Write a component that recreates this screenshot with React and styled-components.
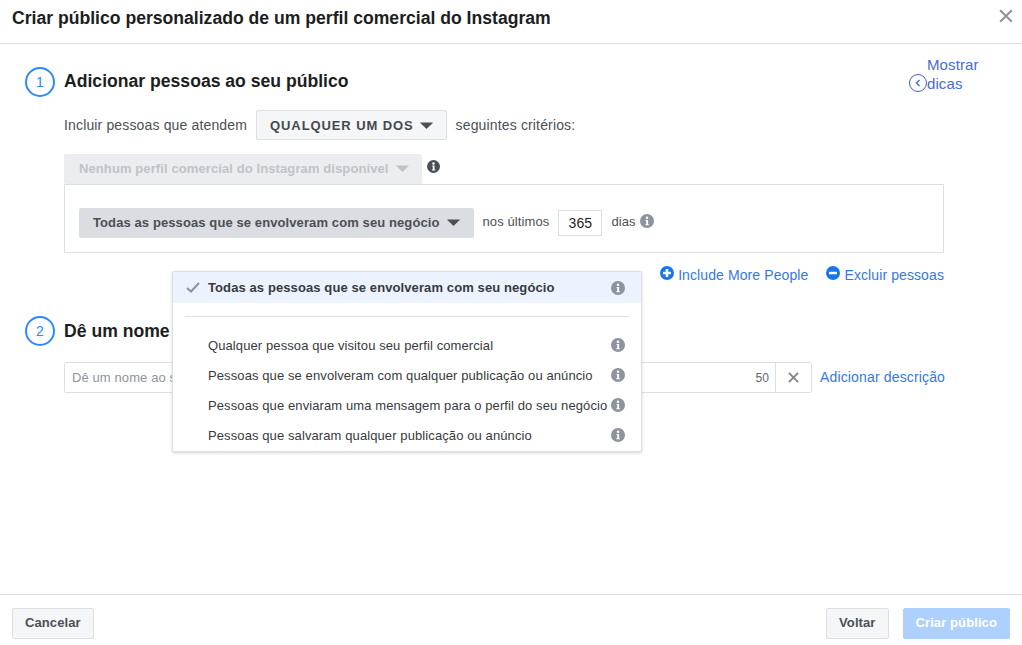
import React from "react";
import styled, { createGlobalStyle } from "styled-components";

const GlobalStyle = createGlobalStyle`
  html, body {
    margin: 0;
    background: #fff;
  }
  * {
    box-sizing: border-box;
  }
`;

const InfoIcon = ({ size = 14, color = "#8d949e" }) => (
  <svg width={size} height={size} viewBox="0 0 14 14" style={{ flex: "none", display: "block" }}>
    <circle cx="7" cy="7" r="7" fill={color} />
    <circle cx="7" cy="3.7" r="1.3" fill="#fff" />
    <path d="M5.6 6h2.5v4.2h.8v1.1H5.3v-1.1h.9V7.1h-.6z" fill="#fff" />
  </svg>
);

const Caret = ({ color = "#4b4f56" }) => (
  <svg width="13" height="7" viewBox="0 0 13 7" style={{ flex: "none" }}>
    <path d="M0.6 0.4h11.8c.4 0 .6.4.3.7L7 6.6a.7.7 0 0 1-1 0L.3 1.1C0 .8.2.4.6.4z" fill={color} />
  </svg>
);

const SignIcon = ({ minus }) => (
  <svg width="14" height="14" viewBox="0 0 14 14" style={{ flex: "none", display: "block", marginTop: "-1px" }}>
    <circle cx="7" cy="7" r="7" fill="#1877e8" />
    <rect x="3" y="5.7" width="8" height="2.6" rx="0.6" fill="#fff" />
    {!minus && <rect x="5.7" y="3" width="2.6" height="8" rx="0.6" fill="#fff" />}
  </svg>
);

const Cross = ({ size = 12, color = "#7f8389", weight = 2 }) => (
  <svg width={size} height={size} viewBox="0 0 12 12" style={{ display: "block" }}>
    <path d="M1 1l10 10M11 1L1 11" stroke={color} strokeWidth={weight} fill="none" />
  </svg>
);

const Page = styled.div`
  width: 1022px;
  height: 645px;
  display: flex;
  flex-direction: column;
  position: relative;
  overflow: hidden;
  font-family: "Liberation Sans", Arial, sans-serif;
  font-size: 13px;
  letter-spacing: 0.1px;
  color: #1c1e21;
`;

const Header = styled.header`
  height: 44px;
  flex: none;
  display: flex;
  justify-content: space-between;
  padding: 0 9px 0 12px;
  border-bottom: 1px solid #dddfe2;
`;

const Title = styled.h1`
  margin: 0;
  font-size: 17.6px;
  line-height: 36px;
  font-weight: 700;
  letter-spacing: 0;
`;

const CloseBtn = styled.span`
  margin-top: 9px;
`;

const Body = styled.main`
  flex: 1;
  padding: 12px 0 0 25px;
`;

const SectionHead = styled.div`
  display: flex;
  align-items: flex-start;
  gap: 9px;
  height: ${({ $tall }) => ($tall ? "54px" : "46px")};
`;

const Step = styled.div`
  width: 30px;
  height: 30px;
  flex: none;
  margin-top: ${({ $top }) => $top}px;
  border: 2px solid #2d88ff;
  border-radius: 50%;
  color: #2d88ff;
  font-size: 14px;
  line-height: 26px;
  text-align: center;
`;

const SectionTitle = styled.h2`
  margin: ${({ $top }) => $top}px 0 0;
  font-size: 17.6px;
  line-height: 30px;
  font-weight: 700;
  letter-spacing: 0;
`;

const Tips = styled.a`
  width: 76px;
  height: 38px;
  margin: -1px 37px 0 auto;
  padding-left: 18px;
  position: relative;
  font-size: 15px;
  line-height: 19px;
  color: #4a6bd6;
`;

const TipsIcon = styled.span`
  position: absolute;
  left: 0;
  top: 19px;
  width: 18px;
  height: 18px;
  border: 1px solid #3b66c4;
  border-radius: 50%;
  display: flex;
  align-items: center;
  justify-content: center;
`;

const Content = styled.div`
  margin-left: 39px;
  width: 880px;
`;

const CriteriaRow = styled.div`
  display: flex;
  align-items: center;
  gap: 9px;
  height: 30px;
  margin-bottom: 14px;
  font-size: 14px;
  letter-spacing: 0.15px;
  color: #4b4f56;
`;

const Select = styled.div`
  height: 30px;
  display: inline-flex;
  align-items: center;
  gap: 7px;
  flex: none;
  padding: 0 13px 2px;
  border: 1px solid ${({ $variant }) => ($variant === "outline" ? "#dddfe2" : "transparent")};
  border-radius: 2px;
  font-size: 13px;
  font-weight: 700;
  background: ${({ $variant }) =>
    $variant === "outline" ? "#f5f6f7" : $variant === "disabled" ? "#ebedf0" : "#dadde1"};
  color: ${({ $variant }) => ($variant === "disabled" ? "#bec3c9" : "#4b4f56")};
`;

const AnyOf = styled(Select)`
  padding-bottom: 0;
  gap: 6px;
  letter-spacing: 0.9px;
  color: #444950;
`;

const SourceSelect = styled(Select)`
  padding-left: 14px;
  padding-right: 12px;
`;

const SourceRow = styled.div`
  display: flex;
  align-items: flex-start;
  gap: 5px;
`;

const SourceInfo = styled.span`
  margin: 6px 0 0 0;
`;

const RuleBox = styled.div`
  height: 69px;
  border: 1px solid #dddfe2;
  padding: 23px 14px 0;
  display: flex;
  align-items: flex-start;
  font-size: 13px;
  color: #4b4f56;
`;

const RuleText = styled.span`
  margin: 6px 9px 0;
  line-height: 16px;
`;

const DaysInput = styled.div`
  width: 44px;
  height: 26px;
  margin-top: 2px;
  border: 1px solid #dddfe2;
  color: #1c1e21;
  font-size: 14px;
  line-height: 24px;
  text-align: center;
`;

const RuleInfo = styled.span`
  margin: 6px 0 0 -5px;
`;

const LinksRow = styled.div`
  display: flex;
  justify-content: flex-end;
  gap: 18px;
  margin-top: 14px;
  height: 49px;
`;

const ActionLink = styled.a`
  display: flex;
  align-items: flex-start;
  gap: 4px;
  font-size: 14px;
  line-height: 16px;
  letter-spacing: 0.1px;
  color: #3578e5;
`;

const NameRow = styled.div`
  display: flex;
  align-items: center;
  height: 31px;
`;

const NameField = styled.div`
  width: 748px;
  height: 31px;
  flex: none;
  display: flex;
  align-items: center;
  justify-content: space-between;
  border: 1px solid #dddfe2;
  border-radius: 2px;
  font-size: 13px;
`;

const Placeholder = styled.span`
  padding-left: 7px;
  color: #90949c;
`;

const Counter = styled.div`
  display: flex;
  align-items: center;
  height: 100%;
  color: #606770;
  font-size: 12px;
`;

const Count = styled.span`
  padding-right: 6px;
`;

const ClearBox = styled.span`
  width: 36px;
  height: 100%;
  display: flex;
  align-items: center;
  justify-content: center;
  border-left: 1px solid #dddfe2;
`;

const DescLink = styled.a`
  margin: -1px 0 0 8px;
  font-size: 14px;
  letter-spacing: 0.15px;
  color: #3578e5;
  white-space: nowrap;
`;

const Footer = styled.footer`
  height: 51px;
  flex: none;
  display: flex;
  align-items: flex-start;
  gap: 14px;
  padding: 13px 12px 0;
  border-top: 1px solid #dddfe2;
`;

const FootBtn = styled.button`
  height: 31px;
  padding: 0 12px 2px;
  border: 1px solid ${({ $primary }) => ($primary ? "#aed0ff" : "#dddfe2")};
  border-radius: 2px;
  font-family: inherit;
  font-size: 13px;
  letter-spacing: 0.1px;
  font-weight: 700;
  background: ${({ $primary }) => ($primary ? "#aed0ff" : "#f5f6f7")};
  color: ${({ $primary }) => ($primary ? "#fff" : "#4b4f56")};
  margin-left: ${({ $push }) => ($push ? "auto" : "0")};
`;

const Menu = styled.div`
  position: absolute;
  left: 172px;
  top: 271px;
  width: 470px;
  height: 181px;
  background: #fff;
  border: 1px solid #dddfe2;
  border-radius: 2px;
  box-shadow: 0 1px 3px rgba(0, 0, 0, 0.18);
`;

const MenuItem = styled.div`
  height: ${({ $selected }) => ($selected ? "31px" : "30px")};
  display: grid;
  grid-template-columns: 35px 1fr 14px;
  align-items: center;
  padding-right: 16px;
  font-size: 13px;
  font-weight: ${({ $selected }) => ($selected ? 700 : 400)};
  background: ${({ $selected }) => ($selected ? "#ecf3ff" : "#fff")};
  color: #373a40;
  white-space: nowrap;
`;

const CheckCell = styled.span`
  display: flex;
  justify-content: center;
  padding-left: 4px;
`;

const Divider = styled.div`
  height: 1px;
  margin: 13px 12px;
  background: #dddfe2;
`;

const options = [
  "Qualquer pessoa que visitou seu perfil comercial",
  "Pessoas que se envolveram com qualquer publicação ou anúncio",
  "Pessoas que enviaram uma mensagem para o perfil do seu negócio",
  "Pessoas que salvaram qualquer publicação ou anúncio",
];

export default function App() {
  return (
    <Page>
      <GlobalStyle />
      <Header>
        <Title>Criar público personalizado de um perfil comercial do Instagram</Title>
        <CloseBtn>
          <Cross size={14} color="#90949c" weight={1.8} />
        </CloseBtn>
      </Header>

      <Body>
        <SectionHead $tall>
          <Step $top={11}>1</Step>
          <SectionTitle $top={10}>Adicionar pessoas ao seu público</SectionTitle>
          <Tips>
            Mostrar dicas
            <TipsIcon>
              <svg width="6" height="8" viewBox="0 0 6 8">
                <path d="M4.5 1L1.5 4l3 3" stroke="#3b66c4" strokeWidth="1.3" fill="none" />
              </svg>
            </TipsIcon>
          </Tips>
        </SectionHead>

        <Content>
          <CriteriaRow>
            Incluir pessoas que atendem
            <AnyOf $variant="outline">
              QUALQUER UM DOS <Caret />
            </AnyOf>
            seguintes critérios:
          </CriteriaRow>

          <SourceRow>
            <SourceSelect $variant="disabled">
              Nenhum perfil comercial do Instagram disponível <Caret color="#bec3c9" />
            </SourceSelect>
            <SourceInfo>
              <InfoIcon size={13} color="#4b4f56" />
            </SourceInfo>
          </SourceRow>

          <RuleBox>
            <Select>
              Todas as pessoas que se envolveram com seu negócio <Caret />
            </Select>
            <RuleText>nos últimos</RuleText>
            <DaysInput>365</DaysInput>
            <RuleText>dias</RuleText>
            <RuleInfo>
              <InfoIcon size={14} />
            </RuleInfo>
          </RuleBox>

          <LinksRow>
            <ActionLink>
              <SignIcon /> Include More People
            </ActionLink>
            <ActionLink>
              <SignIcon minus /> Excluir pessoas
            </ActionLink>
          </LinksRow>
        </Content>

        <SectionHead>
          <Step $top={0}>2</Step>
          <SectionTitle $top={0}>Dê um nome ao seu público</SectionTitle>
        </SectionHead>

        <Content>
          <NameRow>
            <NameField>
              <Placeholder>Dê um nome ao seu público</Placeholder>
              <Counter>
                <Count>50</Count>
                <ClearBox>
                  <Cross size={11} />
                </ClearBox>
              </Counter>
            </NameField>
            <DescLink>Adicionar descrição</DescLink>
          </NameRow>
        </Content>
      </Body>

      <Footer>
        <FootBtn>Cancelar</FootBtn>
        <FootBtn $push>Voltar</FootBtn>
        <FootBtn $primary>Criar público</FootBtn>
      </Footer>

      <Menu>
        <MenuItem $selected>
          <CheckCell>
            <svg width="14" height="11" viewBox="0 0 14 11">
              <path d="M1 6l4 3.5L13 1" stroke="#8d949e" strokeWidth="2" fill="none" />
            </svg>
          </CheckCell>
          Todas as pessoas que se envolveram com seu negócio
          <InfoIcon />
        </MenuItem>
        <Divider />
        {options.map((label) => (
          <MenuItem key={label}>
            <span />
            {label}
            <InfoIcon />
          </MenuItem>
        ))}
      </Menu>
    </Page>
  );
}
